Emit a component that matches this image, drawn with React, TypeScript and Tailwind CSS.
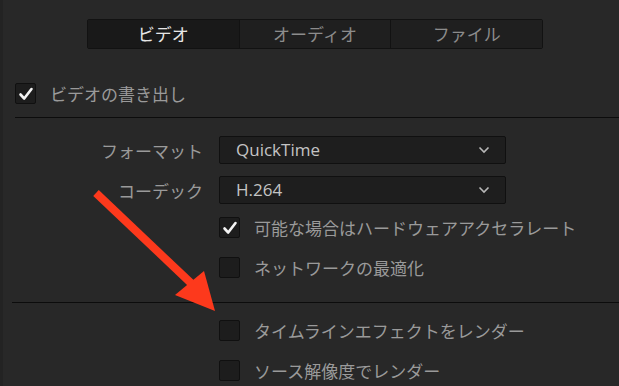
const jp = { fontFamily: '"Noto Sans CJK JP", "Noto Sans", sans-serif' };
const latin = { fontFamily: '"Open Sans", "Noto Sans CJK JP", sans-serif' };

function Box({ checked }: { checked?: boolean }) {
  return (
    <div className="flex h-[21px] w-[21px] shrink-0 items-center justify-center rounded-[2px] border border-[#101010] bg-[#1d1d1d]">
      {checked && (
        <svg width="16" height="16" viewBox="0 0 16 16">
          <path d="M2.5 8.5 L6.2 12.5 L13.5 3" fill="none" stroke="#f4f4f4" strokeWidth="2.6" strokeLinecap="round" strokeLinejoin="round" />
        </svg>
      )}
    </div>
  );
}

function Check({ label, checked, className = "" }: { label: string; checked?: boolean; className?: string }) {
  return (
    <div className={`flex items-center gap-[14px] ${className}`}>
      <Box checked={checked} />
      <span className="text-[17px] leading-none text-[#9a9a9a]" style={jp}>{label}</span>
    </div>
  );
}

function Select({ label, value, className = "" }: { label: string; value: string; className?: string }) {
  return (
    <div className={`flex items-center ${className}`}>
      <span className="w-[216px] pr-[16px] text-right text-[17px] leading-none text-[#9a9a9a]" style={jp}>{label}</span>
      <div className="flex h-[28px] w-[287px] items-center justify-between rounded-[2px] border border-[#101010] bg-[#1e1e1e] pl-[16px] pr-[15px]">
        <span className="text-[17px] text-[#c4c4c4]" style={latin}>{value}</span>
        <svg width="12" height="8" viewBox="0 0 12 8">
          <path d="M1.5 1.5 L6 6 L10.5 1.5" fill="none" stroke="#b8b8b8" strokeWidth="1.6" />
        </svg>
      </div>
    </div>
  );
}

export default function App() {
  return (
    <main className="relative h-[386px] w-[619px] overflow-hidden border-l-[3px] border-[#232323] bg-[#282828]">
      <div className="ml-[84px] mt-[19px] flex h-[30px] w-[456px] rounded-[2px] border border-[#121212] text-[17px]" style={jp}>
        <div className="flex flex-1 items-center justify-center bg-[#191919] text-[#e6e6e6]">ビデオ</div>
        <div className="flex flex-1 items-center justify-center border-l border-[#121212] bg-[#1f1f1f] text-[#8c8c8c]">オーディオ</div>
        <div className="flex flex-1 items-center justify-center border-l border-[#121212] bg-[#1f1f1f] text-[#8c8c8c]">ファイル</div>
      </div>

      <Check label="ビデオの書き出し" checked className="ml-[12px] mt-[34px]" />
      <div className="ml-[12px] mt-[13px] h-[1px] bg-[#0c0c0c]" />

      <Select label="フォーマット" value="QuickTime" className="mt-[18px]" />
      <Select label="コーデック" value="H.264" className="mt-[12px]" />

      <div className="ml-[216px]">
        <Check label="可能な場合はハードウェアアクセラレート" checked className="mt-[13px]" />
        <Check label="ネットワークの最適化" className="mt-[19px]" />
      </div>
      <div className="ml-[9px] mt-[24px] h-[1px] bg-[#0c0c0c]" />
      <div className="ml-[216px]">
        <Check label="タイムラインエフェクトをレンダー" className="mt-[17px]" />
        <Check label="ソース解像度でレンダー" className="mt-[19px]" />
      </div>

      <svg className="pointer-events-none absolute left-0 top-0" width="619" height="386" viewBox="0 0 619 386">
        <line x1="93" y1="193" x2="190" y2="285" stroke="#fd391c" strokeWidth="8" />
        <polygon points="172,295 201,271 212,311" fill="#fd391c" />
      </svg>
    </main>
  );
}
